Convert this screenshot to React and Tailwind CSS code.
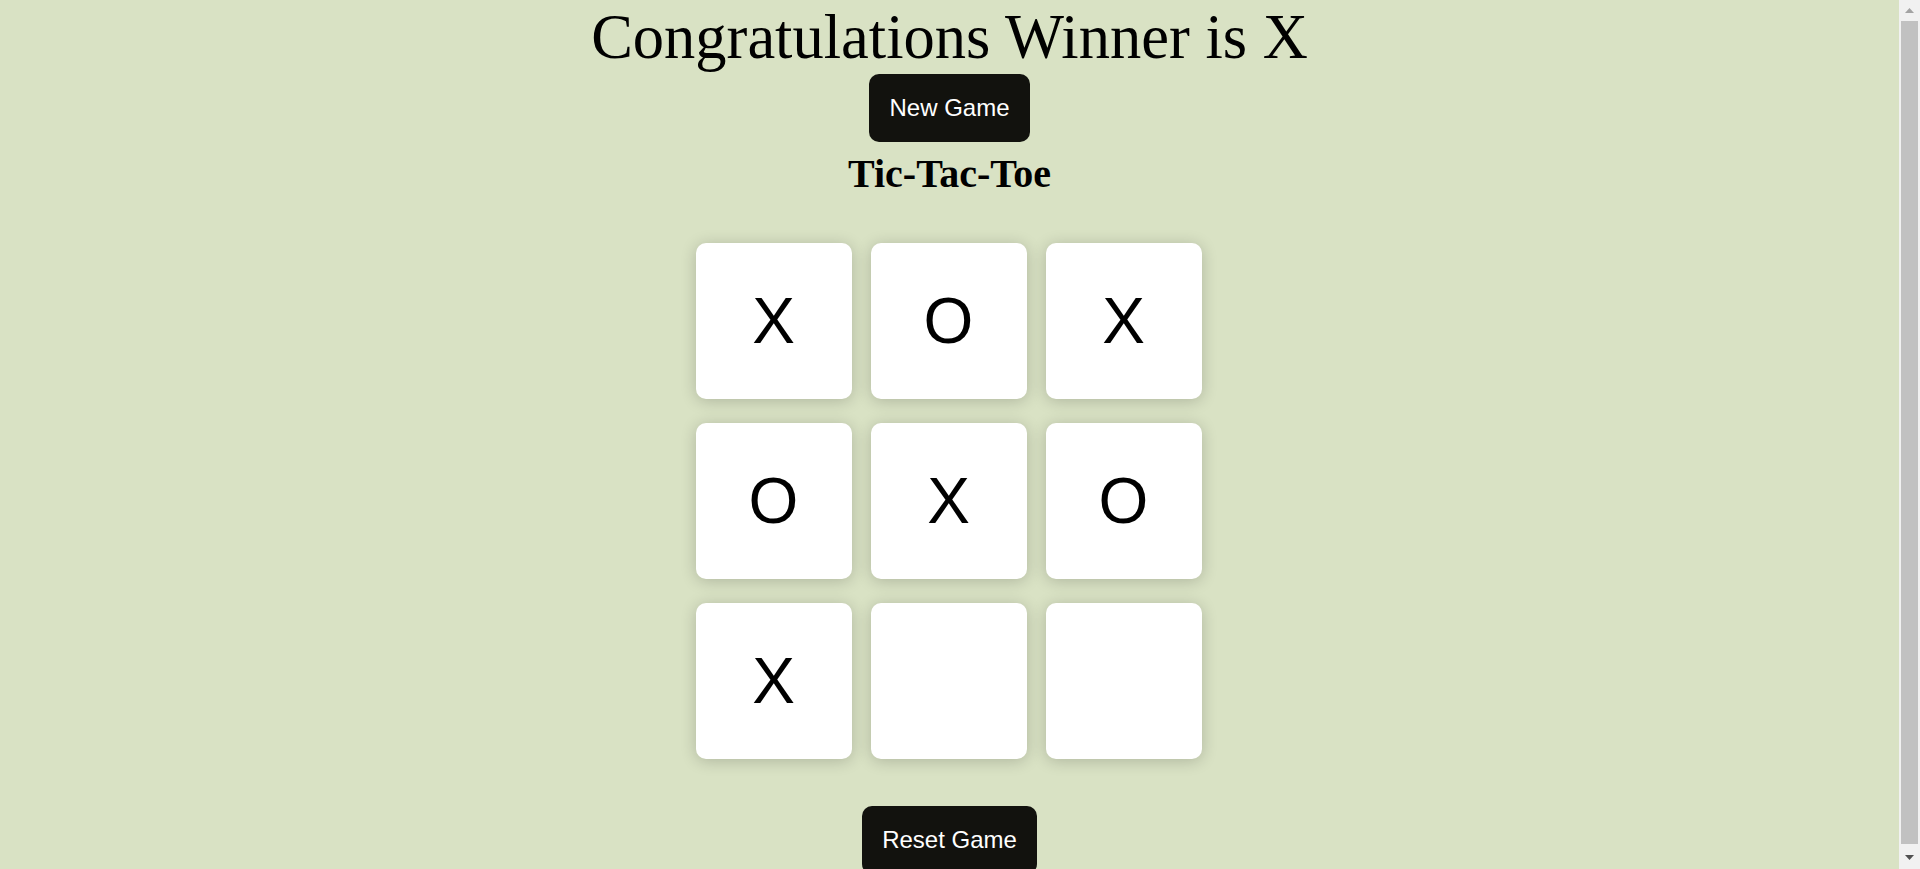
import React from 'react';

const board = ['X', 'O', 'X', 'O', 'X', 'O', 'X', '', ''];

const Cell = ({ value }) => (
    <div className="w-[156px] h-[156px] bg-white rounded-[10px] shadow-[0_2px_16px_rgba(0,0,0,0.2)] flex items-center justify-center font-['Liberation_Sans',Arial,sans-serif] text-[64px] leading-none text-black">
        {value}
    </div>
);

// classic windows-style scrollbar, page is a bit taller than the window
const Scrollbar = () => (
    <div className="w-[21px] shrink-0 h-full bg-[#f1f1f1] flex flex-col">
        <div className="h-[21px] flex items-center justify-center">
            <svg width="9" height="5" viewBox="0 0 9 5">
                <polygon points="4.5,0 9,5 0,5" fill="#a3a3a3" />
            </svg>
        </div>
        <div className="mx-[2px] h-[823px] bg-[#c1c1c1]"></div>
        <div className="flex-1"></div>
        <div className="h-[21px] pb-[2px] flex items-center justify-center">
            <svg width="9" height="5" viewBox="0 0 9 5">
                <polygon points="0,0 9,0 4.5,5" fill="#505050" />
            </svg>
        </div>
    </div>
);

const App = () => {
    return (
        <div className="flex h-screen overflow-hidden bg-[#d9e2c4]">
            <main className="flex-1 pt-[1px] flex flex-col items-center font-['Liberation_Serif','Times_New_Roman',serif] text-black">
                <h1 className="m-0 text-[62.5px] leading-[73px] font-normal">Congratulations Winner is X</h1>
                <button className="bg-[#12120e] text-white font-['Liberation_Sans',Arial,sans-serif] text-[24px] leading-[normal] p-5 rounded-[10px]">
                    New Game
                </button>
                <h2 className="mt-[10px] text-[40px] leading-[44px] font-bold">Tic-Tac-Toe</h2>
                <div className="mt-[47px] mr-[2px] grid grid-cols-[repeat(3,156px)] gap-x-[19px] gap-y-[24px]">
                    {board.map((v, i) => (
                        <Cell key={i} value={v} />
                    ))}
                </div>
                <button className="mt-[47px] bg-[#12120e] text-white font-['Liberation_Sans',Arial,sans-serif] text-[24px] leading-[normal] p-5 rounded-[10px]">
                    Reset Game
                </button>
            </main>
            <Scrollbar />
        </div>
    );
};

export default App;
